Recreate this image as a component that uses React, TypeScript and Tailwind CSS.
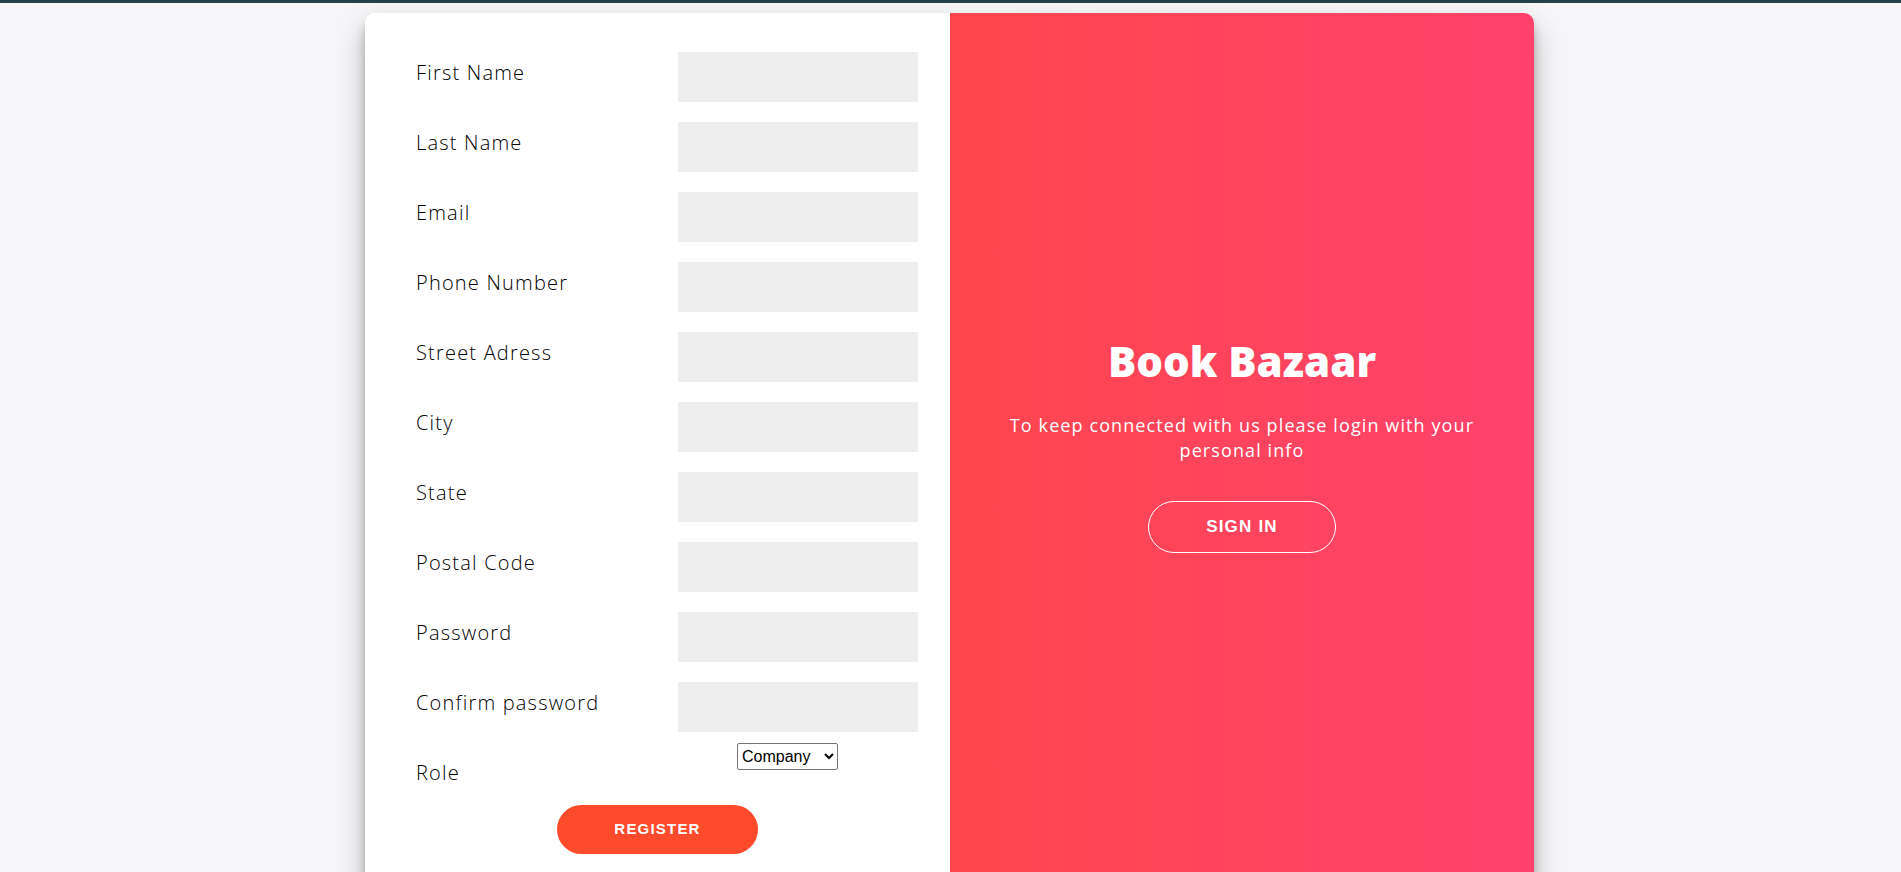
import { useState } from "react";

const fields = [
    "First Name",
    "Last Name",
    "Email",
    "Phone Number",
    "Street Adress",
    "City",
    "State",
    "Postal Code",
    "Password",
    "Confirm password",
];

function RegisterForm() {
    const [role, setRole] = useState("company");

    return (
        <div className="w-[585px] pt-[39px]">
            <div className="pl-[51px] flex flex-col gap-[20px]">
                {fields.map((label) => (
                    <div key={label} className="flex h-[50px]">
                        <label className="w-[262px] pt-[7px] text-[20px] leading-[28px] text-black font-light font-['Open_Sans',sans-serif] tracking-[1.2px]">
                            {label}
                        </label>
                        <input
                            type={label.toLowerCase().includes("password") ? "password" : "text"}
                            className="w-[240px] h-[50px] bg-[#eeeeee] px-3 outline-none"
                        />
                    </div>
                ))}
            </div>
            <div className="pl-[51px] flex mt-[11px]">
                <label className="w-[262px] pt-[16px] text-[20px] leading-[28px] text-black font-light font-['Open_Sans',sans-serif] tracking-[1.2px]">
                    Role
                </label>
                <select
                    value={role}
                    onChange={(e) => setRole(e.target.value)}
                    className="ml-[59px] h-[27px] w-[101px] self-start border border-[#767676] rounded-[2px] bg-white text-black text-[16px] font-['Liberation_Sans',Arial,sans-serif]"
                >
                    <option value="company">Company</option>
                    <option value="customer">Customer</option>
                </select>
            </div>
            <div className="flex justify-center mt-[18px]">
                <button
                    type="submit"
                    className="w-[201px] h-[49px] rounded-full bg-[#ff4b2b] text-white text-[15px] font-bold tracking-[1.2px] uppercase font-['Liberation_Sans',Arial,sans-serif]"
                >
                    Register
                </button>
            </div>
        </div>
    );
}

export default function App() {
    return (
        <div className="min-h-screen bg-[#f6f6f8]">
            <div className="h-[3px] bg-[#27414a]" />
            <div className="pt-[10px] pb-[20px] pr-[2px] flex justify-center">
                <div className="w-[1169px] h-[880px] flex rounded-[10px] overflow-hidden bg-white shadow-[0_14px_28px_rgba(0,0,0,0.25),0_10px_10px_rgba(0,0,0,0.22)]">
                    <RegisterForm />
                    <div className="flex-1 flex flex-col items-center justify-center text-white bg-gradient-to-r from-[#ff464c] to-[#ff416c] text-center">
                        <h1 className="-mt-[16px] text-[42px] leading-[48px] font-extrabold font-['Open_Sans',sans-serif]">
                            Book Bazaar
                        </h1>
                        <p className="mt-[28px] text-[18px] leading-[25px] tracking-[1.1px] font-normal font-['Open_Sans',sans-serif]">
                            To keep connected with us please login with your
                            <br />
                            personal info
                        </p>
                        <button
                            type="button"
                            className="mt-[38px] w-[188px] h-[52px] rounded-full border border-white bg-transparent text-[17px] font-bold tracking-[1.2px] font-['Liberation_Sans',Arial,sans-serif]"
                        >
                            SIGN IN
                        </button>
                    </div>
                </div>
            </div>
        </div>
    );
}
